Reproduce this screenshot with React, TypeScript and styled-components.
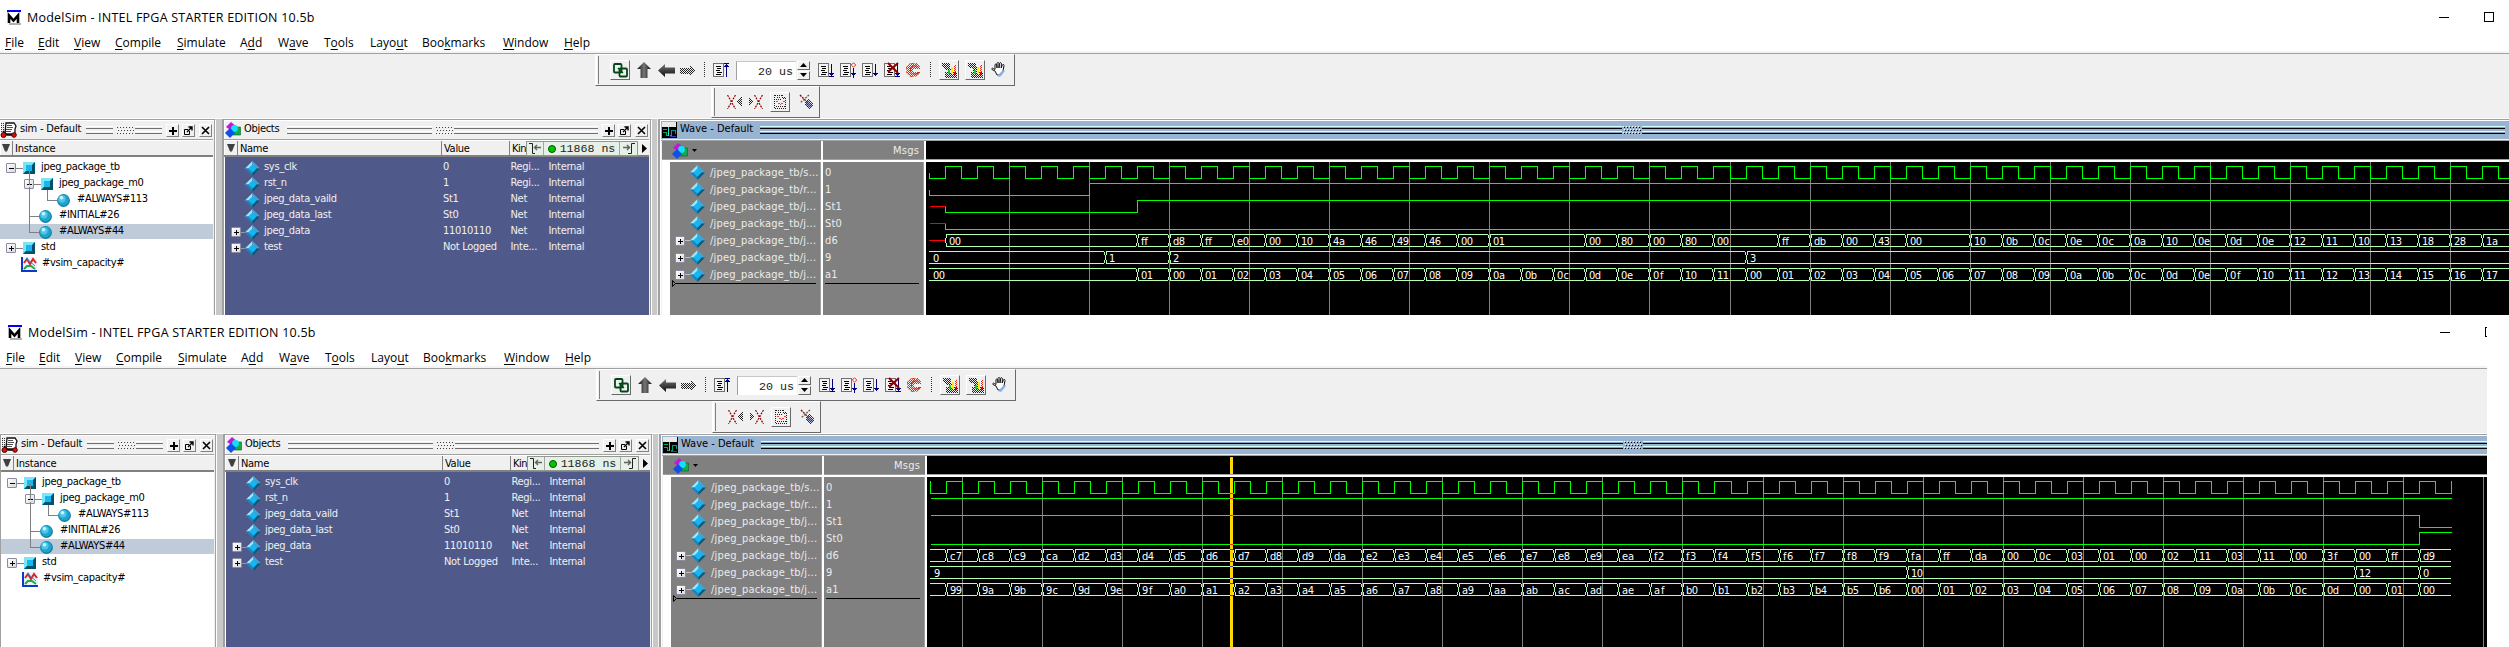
import React from "react";
import styled, { createGlobalStyle } from "styled-components";

const Global = createGlobalStyle`
  html, body { margin: 0; padding: 0; background: #fff; overflow: hidden; }
  * { box-sizing: border-box; }
  svg { display: block; flex: none; }
`;

const tahoma = `"DejaVu Sans Condensed", "DejaVu Sans", sans-serif`;
const segoe = `"Open Sans", "Noto Sans", sans-serif`;
const mono = `"Liberation Mono", monospace`;

const Page = styled.div`
  width: 2509px;
  height: 647px;
  background: #fff;
`;

const Window = styled.section<{ $w: number; $h: number; $inset: number }>`
  display: flex;
  flex-direction: column;
  width: ${(p) => p.$w}px;
  height: ${(p) => p.$h}px;
  overflow: hidden;
  background: #f0f0f0;
  --inset: ${(p) => p.$inset}px;
`;

const TitleBar = styled.header`
  display: flex;
  flex: none;
  align-items: center;
  height: 35px;
  padding-left: calc(7px + var(--inset));
  background: #fff;
  font: 12.5px/35px ${segoe};
  color: #000;
`;

const TitleText = styled.span`
  flex: none;
  width: 2418px;
  padding-left: 6px;
  letter-spacing: 0.22px;
  white-space: nowrap;
`;

const TitleButton = styled.span<{ $gap: number; $lift?: number }>`
  flex: none;
  margin-left: ${(p) => p.$gap}px;
  margin-bottom: ${(p) => p.$lift ?? 0}px;
`;

const MenuBar = styled.nav`
  display: flex;
  flex: none;
  height: 19px;
  padding-left: calc(5px + var(--inset));
  background: #fff;
  border-bottom: 1px solid #a0a0a0;
  box-shadow: inset 0 -2px #f4f4f4;
  font: 12px/15px ${segoe};
`;

const MenuItem = styled.span<{ $w: number }>`
  flex: none;
  width: ${(p) => p.$w}px;
  white-space: pre;
  u { text-underline-offset: 2px; text-decoration-thickness: 1px; }
`;

const ToolRow = styled.div<{ $left: number; $h: number }>`
  display: flex;
  flex: none;
  height: ${(p) => p.$h}px;
  padding-left: calc(${(p) => p.$left}px + var(--inset));
`;

const ToolBar = styled.div<{ $w: number }>`
  display: flex;
  align-items: center;
  width: ${(p) => p.$w}px;
  height: 32px;
  border: 1px solid #696969;
  border-top-color: #fff;
  border-left-color: #fff;
`;

const Handle = styled.span`
  flex: none;
  width: 3px;
  height: 28px;
  border-left: 1px solid #fff;
  border-right: 1px solid #808080;
`;

const Tool = styled.span<{ $gap: number; $raised?: boolean; $w: number }>`
  display: flex;
  flex: none;
  align-items: center;
  justify-content: center;
  width: ${(p) => p.$w}px;
  height: 20px;
  margin-left: ${(p) => p.$gap}px;
  ${(p) =>
    p.$raised &&
    "border: 1px solid #696969; border-top-color: #fff; border-left-color: #fff;"}
`;

const Grip = styled.span<{ $gap: number }>`
  flex: none;
  width: 18px;
  height: 8px;
  margin-left: ${(p) => p.$gap}px;
`;

const Dots = styled.span<{ $gap: number }>`
  flex: none;
  width: 1px;
  height: 16px;
  margin-left: ${(p) => p.$gap}px;
  background: repeating-linear-gradient(#303030 0 1px, transparent 1px 2px);
`;

const TimeField = styled.span`
  flex: none;
  width: 60px;
  height: 19px;
  margin-left: 7px;
  padding-right: 3px;
  background: #fff;
  border-top: 1px solid #c8c8c8;
  border-left: 1px solid #a0a0a0;
  font: 11.7px/20px ${mono};
  text-align: right;
  color: #222;
`;

const Spinner = styled.span`
  display: grid;
  flex: none;
  width: 13px;
  height: 19px;
  margin-left: 1px;
  grid-template-rows: 9px 9px;
  row-gap: 1px;
`;

const SpinKey = styled.span`
  display: grid;
  place-items: center;
  border: 1px solid #696969;
  border-top-color: #fff;
  border-left-color: #fff;
`;

const Workspace = styled.div`
  display: flex;
  flex: 1;
  min-height: 0;
  border-top: 1px solid #fff;
  font: 11px/16px ${tahoma};
  font-stretch: condensed;
  color: #000;
`;

const EdgeStrip = styled.span`
  flex: none;
  width: var(--inset);
  background: #a0a0a0;
`;

const Sash = styled.div<{ $w: number; $gap: number }>`
  flex: none;
  width: ${(p) => p.$w}px;
  margin-right: ${(p) => p.$gap}px;
  background: #c8c8c8;
`;

const Panel = styled.div<{ $w: number; $open?: boolean }>`
  display: flex;
  flex: none;
  flex-direction: column;
  width: ${(p) => p.$w}px;
  border-top: 1px solid #a0a0a0;
  border-left: ${(p) => (p.$open ? "0" : "2px solid #a0a0a0")};
  border-right: 1px solid #fff;
  box-shadow: inset -1px 0 #a0a0a0, inset 0 1px #fff, inset 1px 0 #fff;
`;

const PanelTitle = styled.div<{ $pad: number }>`
  display: flex;
  flex: none;
  align-items: center;
  height: 20px;
  margin-right: 2px;
  padding-left: ${(p) => p.$pad}px;
  padding-top: 1px;
  border-bottom: 1px solid #a0a0a0;
`;

const PanelName = styled.span<{ $w: number; $ls: number }>`
  flex: none;
  width: ${(p) => p.$w}px;
  margin-left: 3px;
  padding-bottom: 2px;
  line-height: 14px;
  white-space: nowrap;
  letter-spacing: ${(p) => p.$ls}px;
`;

const Stripes = styled.span<{ $w: number; $gap?: number; $active?: boolean }>`
  flex: none;
  width: ${(p) => p.$w}px;
  height: 8px;
  margin-left: ${(p) => p.$gap ?? 0}px;
  background: ${(p) =>
    p.$active
      ? "linear-gradient(#d8fdff 0 1px,#86a3bd 1px 2px,#000 2px 3px,#99b4d1 3px 5px,#d8fdff 5px 6px,#86a3bd 6px 7px,#000 7px 8px)"
      : "linear-gradient(#fff 0 1px,#f0f0f0 1px 2px,#707070 2px 3px,#f0f0f0 3px 5px,#fff 5px 6px,#f0f0f0 6px 7px,#707070 7px 8px)"};
`;

const KeyCap = styled.span<{ $gap: number }>`
  display: grid;
  flex: none;
  place-items: center;
  width: 13px;
  height: 13px;
  margin-top: 1px;
  margin-left: ${(p) => p.$gap}px;
  border: 1px solid #808080;
  border-top-color: #fff;
  border-left-color: #fff;
`;

const ColumnHead = styled.div`
  position: relative;
  display: flex;
  flex: none;
  height: 17px;
  margin-right: 2px;
  border-top: 1px solid #fff;
  border-bottom: 2px solid #808080;
  line-height: 16px;
`;

const Head = styled.span<{ $w: number; $ls?: number }>`
  flex: none;
  width: ${(p) => p.$w}px;
  height: 14px;
  padding-left: 2px;
  border-left: 1px solid #808080;
  letter-spacing: ${(p) => p.$ls ?? -0.3}px;
  white-space: nowrap;
`;

const SortCell = styled.span<{ $w: number }>`
  display: grid;
  flex: none;
  width: ${(p) => p.$w}px;
  place-items: center;
`;

const TimeBadge = styled.div`
  position: absolute;
  top: 0;
  left: 302px;
  display: flex;
  width: 112px;
  height: 15px;
  background: #e6f0e6;
  border: 1px solid #909890;
  font: 11.6px/14px ${mono};
  color: #222;
`;

const BadgeCell = styled.span<{ $w: number }>`
  display: flex;
  flex: none;
  align-items: center;
  justify-content: center;
  gap: 4px;
  width: ${(p) => p.$w}px;
  border-right: 1px solid #a0a8a0;
  white-space: pre;
  &:last-child { border-right: 0; }
`;

const BadgeArrow = styled.span`
  position: absolute;
  top: 3px;
  left: 418px;
`;

const TreeBody = styled.div`
  flex: 1;
  margin-right: 2px;
  padding-top: 3px;
  background: #fff;
`;

const TreeRow = styled.div<{ $indent: number; $selected?: boolean }>`
  position: relative;
  display: flex;
  align-items: center;
  height: 16px;
  padding-left: ${(p) => p.$indent}px;
  background: ${(p) =>
    p.$selected ? "linear-gradient(#bfcbd9 0 15px, #fff 15px)" : "transparent"};
  white-space: nowrap;
`;

const TreeLabel = styled.span<{ $gap: number; $ls?: number }>`
  margin-left: ${(p) => p.$gap}px;
  padding-bottom: 2px;
  line-height: 14px;
  letter-spacing: ${(p) => p.$ls ?? -0.3}px;
`;

const Guide = styled.span<{ $x: number; $h: number; $w: number }>`
  position: absolute;
  left: ${(p) => p.$x}px;
  bottom: 7px;
  width: ${(p) => p.$w}px;
  height: ${(p) => p.$h}px;
  border-left: 1px solid #808080;
  border-bottom: 1px solid #808080;
`;

const Box = styled.span`
  display: grid;
  flex: none;
  place-items: center;
  width: 10px;
  height: 10px;
  background: linear-gradient(135deg, #fff, #d8d8e0);
  border: 1px solid #8c8ca0;
  border-radius: 1px;
`;

const Joint = styled.span<{ $w: number; $c?: string }>`
  flex: none;
  width: ${(p) => p.$w}px;
  height: 1px;
  background: ${(p) => p.$c ?? "#808080"};
`;

const Joined = styled.span`
  display: flex;
  align-items: center;
`;

const ObjectBody = styled.div`
  flex: 1;
  margin: 0 2px 0 1px;
  padding-top: 3px;
  background: #505a8a;
  color: #f0f0f0;
`;

const ObjectRow = styled.div`
  display: grid;
  grid-template-columns: 6px 14px 19px 179px 67.5px 38px auto;
  align-items: center;
  height: 16px;
  letter-spacing: -0.3px;
  white-space: nowrap;
`;

const ObjectText = styled.span`
  padding-bottom: 2px;
  line-height: 14px;
`;

const WavePanel = styled.div`
  display: flex;
  flex: 1;
  flex-direction: column;
  min-width: 0;
  overflow: hidden;
  border-top: 1px solid #a0a0a0;
  border-left: 2px solid #a0a0a0;
`;

const WaveInner = styled.div`
  display: flex;
  flex: 1;
  flex-direction: column;
  width: 1900px;
  border-top: 1px solid #fff;
  border-left: 1px solid #fff;
`;

const WaveTitle = styled.div`
  display: flex;
  flex: none;
  align-items: center;
  height: 20px;
  padding: 0 0 1px 1px;
  background: #99b4d1;
  border-bottom: 1px solid #a0a0a0;
  box-shadow: inset 0 -1px #f0f0f0;
`;

const WaveColumns = styled.div`
  display: flex;
  flex: 1;
  padding-left: 1px;
`;

const Column = styled.div<{ $w: number; $gray?: number; $white?: number }>`
  display: flex;
  flex: none;
  flex-direction: column;
  width: ${(p) => p.$w}px;
  border-right: ${(p) => p.$white ?? 0}px solid #fff;
  box-shadow: ${(p) => (p.$gray ? "inset -1px 0 #a0a0a0" : "none")};
  color: #ececec;
  letter-spacing: 0.2px;
`;

const ColumnTop = styled.div`
  display: flex;
  flex: none;
  align-items: center;
  height: 21px;
  padding-left: 10px;
  background: #808080;
  border-bottom: 2px solid #fff;
  box-shadow: inset 0 -1px #a0a0a0;
`;

const Msgs = styled.span`
  margin-left: auto;
  padding-right: 5px;
`;

const ColumnBody = styled.div<{ $strip?: number; $pad: number }>`
  flex: 1;
  padding: 2px 0 0 ${(p) => p.$pad}px;
  margin-right: 1px;
  background: #808080;
  border-left: ${(p) => p.$strip ?? 0}px solid #fff;
`;

const SignalRow = styled.div`
  display: grid;
  grid-template-columns: 10px 5px 20px auto;
  align-items: center;
  height: 17px;
  white-space: nowrap;
`;

const ValueRow = styled.div`
  height: 17px;
  line-height: 17px;
`;

const EndLine = styled.div<{ $w: number }>`
  width: ${(p) => p.$w}px;
  height: 1px;
  background: #000;
`;

const EndMarker = styled.div`
  display: flex;
  align-items: center;
  height: 7px;
  margin: -3px 0 0 -3px;
`;

/* ---------- icons ---------- */

const Logo = () => (
  <svg width="14" height="15" viewBox="0 0 14 15">
    <rect width="14" height="2" fill="#0000ff" />
    <rect x="2" y="13" width="12" height="2" fill="#b0b0b0" />
    <path d="M2 13V5.500l4.500 5 4.500-5V13" fill="none" stroke="#000" strokeWidth="2.600" />
  </svg>
);

const Diamond = ({ s = 15 }: { s?: number }) => (
  <svg width={s} height={s} viewBox="0 0 16 16">
    <path d="M8 0L0 8l4 0 4-4z" fill="#9be8fb" />
    <path d="M8 0l8 8h-4L8 4z" fill="#38a8dc" />
    <path d="M0 8l8 8v-4L4 8z" fill="#1486c4" />
    <path d="M16 8l-8 8v-4l4-4z" fill="#085878" />
    <path d="M8 3.600L12.400 8 8 12.400 3.600 8z" fill="#14b6f4" />
  </svg>
);

const Cube = () => (
  <svg width="12" height="12" viewBox="0 0 12 12">
    <rect width="12" height="12" fill="#18b4e8" />
    <path d="M0 0h12L9 3H3v6L0 12z" fill="#7ce4f8" />
    <path d="M12 0v12H0l3-3h6V3z" fill="#045068" />
    <rect x="3" y="3" width="6" height="6" fill="#14b8ec" />
  </svg>
);

const Sphere = () => (
  <svg width="13" height="13" viewBox="0 0 13 13">
    <circle cx="6.500" cy="6.500" r="6.400" fill="#0c80a8" />
    <circle cx="6.200" cy="6" r="5.600" fill="#20a4cc" />
    <circle cx="5" cy="4.800" r="3.600" fill="#4cc8ec" />
    <circle cx="4.500" cy="3.800" r="1.800" fill="#c8f6ff" />
  </svg>
);

const ChartIcon = () => (
  <svg width="16" height="15" viewBox="0 0 16 15">
    <rect x="2" width="14" height="13" fill="#e8f4fc" />
    <path d="M1 0v14h15" fill="none" stroke="#1038c8" strokeWidth="2" />
    <path d="M3 6l3-4 3 5 3-5 3 4" fill="none" stroke="#e02020" strokeWidth="2" />
    <path d="M5 1l9 8" stroke="#3088d0" />
    <path d="M3 12l3-3 4 0 4 3" fill="none" stroke="#28a838" strokeWidth="2" />
  </svg>
);

const Shapes = () => (
  <svg width="16" height="16" viewBox="0 0 16 16">
    <rect x="8" y="5" width="7.500" height="8" fill="#18a848" stroke="#086028" strokeWidth=".6" />
    <path d="M6 0l6 5-5 4-6-4z" fill="#c018d8" />
    <circle cx="9.500" cy="6.500" r="3.400" fill="#10e0f8" />
    <path d="M5 6l5 5-5 5-5-5z" fill="#1050e8" />
  </svg>
);

const SimIcon = () => (
  <svg width="17" height="16" viewBox="0 0 17 16">
    <path d="M6 1h8l2 3-1 3v5H5z" fill="#fff" stroke="#111" strokeWidth="1.300" />
    <path d="M7 3.500h5M7 5.500h6M6 7.500h6M6 9.500h5" stroke="#222" strokeWidth=".8" />
    <path d="M1.500 1v9M3.500 1v8" stroke="#333" strokeDasharray="1 1" />
    <path d="M3 9l4 4h7" fill="none" stroke="#000" strokeWidth="1.500" />
    <circle cx="3.500" cy="13" r="2.500" fill="#d81010" stroke="#500" />
    <circle cx="14" cy="13" r="2.300" fill="#d81010" stroke="#500" />
  </svg>
);

const WaveIcon = () => (
  <svg width="15" height="16" viewBox="0 0 15 16" shapeRendering="crispEdges">
    <rect width="15" height="16" fill="#000" />
    <rect width="14" height="5" fill="#e8e8e8" />
    <path d="M1 10.500h3v3h3M1 7.500h4" fill="none" stroke="#00b050" />
    <path d="M6.500 5v9" stroke="#30e0e0" />
    <path d="M8 13.500h1v-5h4v3" fill="none" stroke="#00a080" />
    <path d="M8 14.500h6" stroke="#4030d0" />
  </svg>
);

const PlusGlyph = () => (
  <svg width="8" height="8" viewBox="0 0 8 8" shapeRendering="crispEdges">
    <path d="M3 0h2v3h3v2H5v3H3V5H0V3h3z" />
  </svg>
);
const FloatGlyph = () => (
  <svg width="9" height="9" viewBox="0 0 9 9" fill="none" stroke="#000">
    <path d="M4 3.500H.5v5h5V5" />
    <path d="M3 6l5-5M4.500 1H8v3.500" strokeWidth="1.400" />
  </svg>
);
const CloseGlyph = () => (
  <svg width="9" height="9" viewBox="0 0 9 9" stroke="#000" strokeWidth="1.600">
    <path d="M1 1l7 7M8 1L1 8" />
  </svg>
);
const BoxGlyph = ({ open }: { open?: boolean }) => (
  <svg width="6" height="6" viewBox="0 0 6 6" shapeRendering="crispEdges" stroke="#000">
    <path d={open ? "M.5 3.500h5" : "M.5 3.500h5M3.500 1v5"} />
  </svg>
);
const SortGlyph = () => (
  <svg width="8" height="8" viewBox="0 0 8 8">
    <path d="M0 0h8L5 7.500H3z" fill="#404040" />
  </svg>
);
const Dither = ({ active }: { active?: boolean }) => (
  <svg width="18" height="8" viewBox="0 0 18 8" shapeRendering="crispEdges" strokeDasharray="1 2">
    {[0, 3, 6].map((y, i) => (
      <g key={y}>
        <path d={`M${i === 1 ? 1 : 0} ${y + 0.5}h17`} stroke="#fff" />
        <path d={`M${i === 1 ? 2 : 1} ${y + 1.5}h16`} stroke={active ? "#000" : "#404040"} />
      </g>
    ))}
  </svg>
);

const Patterns = () => (
  <svg width="0" height="0">
    <defs>
      {[["dk", "#202020"], ["rd", "#e02810"], ["bl", "#1028a0"]].map(([id, c]) => (
        <pattern key={id} id={id} width="2" height="2" patternUnits="userSpaceOnUse">
          <rect width="1" height="1" fill={c} />
          <rect x="1" y="1" width="1" height="1" fill={c} />
        </pattern>
      ))}
      <linearGradient id="metal" x2="1" y2="0">
        <stop offset="0" stopColor="#111" />
        <stop offset=".5" stopColor="#777" />
        <stop offset="1" stopColor="#111" />
      </linearGradient>
      <linearGradient id="metalH" x2="0" y2="1">
        <stop offset="0" stopColor="#777" />
        <stop offset="1" stopColor="#0a0a0a" />
      </linearGradient>
    </defs>
  </svg>
);

const ChainIcon = () => (
  <svg width="15" height="15" viewBox="0 0 15 15" fill="none" stroke="#004818" strokeWidth="1.800">
    <rect x="1" y="1" width="7.500" height="8.500" rx="1" />
    <rect x="6.500" y="5.500" width="7.500" height="8" rx="1" />
    <path d="M5 5l5 5" strokeWidth="1.200" />
  </svg>
);
const UpIcon = () => (
  <svg width="14" height="16" viewBox="0 0 14 16"><path d="M7 0l7 7h-3.500v9h-7V7H0z" fill="url(#metal)" /></svg>
);
const LeftIcon = () => (
  <svg width="17" height="13" viewBox="0 0 17 13"><path d="M0 6.500L7 0v3.500h10v6H7V13z" fill="url(#metalH)" /></svg>
);
const RightIcon = () => (
  <svg width="16" height="13" viewBox="0 0 16 13" shapeRendering="crispEdges"><path d="M16 6.500L10 0v3.500H0v6h10V13z" fill="url(#dk)" /></svg>
);

const DocIcon = ({ kind }: { kind: "restart" | "run" | "cont" | "all" | "break" }) => (
  <svg width="16" height="16" viewBox="0 0 16 16" fill="none">
    <g shapeRendering="crispEdges">
      <rect x=".5" y="1.500" width="10" height="13" fill="#f4f4f4" stroke="#707070" />
      <path d="M3 4.500h5M4 6.500h4M3 8.500h4M4 10.500h5M3 12.500h5" stroke="#000" />
    </g>
    <g stroke="#000080" shapeRendering="crispEdges">
      {kind === "restart" && <path d="M11 1.500h5M11 4.500h5M12 3.500h3M13.500 2v13" />}
      {kind !== "restart" && <path d={`M13.500 ${kind === "cont" ? 6 : 2}v12M11 11.500h5M12 12.500h3`} />}
      {(kind === "run" || kind === "break") && <path d="M11 14.500h5" />}
    </g>
    {kind === "cont" && <path d="M13.500.8l2.200 2.200-2.200 2.200L11.300 3z" stroke="#e02020" fill="#fff" />}
    {kind === "break" && <path d="M4 1l10 10M14 1L4 10" stroke="#900000" strokeWidth="2" />}
  </svg>
);

const StopIcon = () => (
  <svg width="14" height="14" viewBox="0 0 14 14">
    <path d="M4 0h6l4 4v2H9L8 5 6 7l2 2h6v1l-4 4H4l-4-4V4z" fill="url(#rd)" shapeRendering="crispEdges" />
    <path d="M12.500 4.500l-2-1.500H7L4.500 5v4L7 11h4l2-2" fill="none" stroke="#e02810" />
    <path d="M4 .5h6l3.500 3.500M4 .5L.5 4v6L4 13.500h6l3.500-3.500" fill="none" stroke="#f07860" strokeDasharray="2 1" />
  </svg>
);

const ProfileIcon = ({ alt }: { alt?: boolean }) => (
  <svg width="16" height="16" viewBox="0 0 16 16" shapeRendering="crispEdges">
    <path d={alt ? "M1 1h8v4l2 2v7H6V7L1 5z" : "M1 1h8v5l2 2H6L1 5z"} fill="url(#dk)" />
    <path d="M4 10h12v6H4z" fill="url(#dk)" />
    <path d="M8 8v4" stroke="#10d020" strokeWidth="2" />
    <path d="M11 5v7" stroke="#f8f000" strokeWidth="2" />
    <path d="M14.500 3v9" stroke="#f02020" strokeDasharray="1 1" />
    <path d="M13.500 4v9" stroke="#f02020" strokeDasharray="1 1" />
  </svg>
);

const HandIcon = () => (
  <svg width="16" height="16" viewBox="0 0 16 16">
    <path d="M4 9L1 7.500c-.8-1 .4-1.800 1.400-1L4 7.500V3c0-1.300 1.600-1.300 1.800 0L6 6V1.500c0-1.300 1.900-1.300 2 0V6l.5-4.500c.3-1.200 1.900-1 1.900.2L10.200 6l1.100-3c.5-1 1.900-.6 1.700.5L12 9l-2 4H6z" fill="#fff" stroke="#101010" />
    <path d="M6 14l6-6 2 1-5 6z" fill="#88b0e8" />
  </svg>
);

const DelIcon = ({ flip }: { flip?: boolean }) => (
  <svg width="15" height="14" viewBox="0 0 15 14">
    <g transform={flip ? "translate(15 0) scale(-1 1)" : undefined}>
      <path d="M.5 0L4 6v2L.5 14M8.500 0L5 6v2l3.500 6" fill="none" stroke="#900000" strokeWidth="1.200" strokeDasharray="2 1" />
      <path d="M14.500 2v10L9 7z" fill="url(#dk)" shapeRendering="crispEdges" />
    </g>
  </svg>
);

const PageIcon = () => (
  <svg width="12" height="14" viewBox="0 0 12 14" fill="none" shapeRendering="crispEdges">
    <path d="M.5.5h8l3 3v10H.5z" stroke="#202020" strokeDasharray="1 1" />
    <path d="M8.500 0v3.500H12M3 2.500h4M2 4.500h5M2 11.500h9" stroke="#202020" strokeDasharray="1 1" />
    <path d="M2 6.500h2M4 8.500h2M7 8.500h2M9 6.500h2M6 9.500h1" stroke="#f04040" />
  </svg>
);

const WipeIcon = () => (
  <svg width="14" height="16" viewBox="0 0 14 16">
    <path d="M1 1l8 8" stroke="#900000" strokeDasharray="2 1" strokeWidth="1.400" />
    <path d="M10 1L1 9" stroke="#606060" strokeDasharray="2 1" strokeWidth="1.400" />
    <path d="M6 7l3-2 5 5v3l-3 2-5-4z" fill="url(#bl)" shapeRendering="crispEdges" />
    <path d="M7 7l6 4-1 3-5-3z" fill="#3050c0" opacity=".5" />
  </svg>
);

/* ---------- waveform drawing ---------- */

type Level = "x" | 0 | 1;
type Step<T> = [number, T];

interface Trace {
  end: number;
  clockStub: boolean;
  gridFirst: number;
  bits: Step<Level>[][];
  buses: Step<string | null>[][];
  cursor?: number;
}

/* Half-period n of the clock to a pixel column of the drawing. */
const col = (n: number) => 3 + Math.round(16.01 * n);

const BitTrace = ({ top, steps, end, stub }: { top: number; steps: Step<Level>[]; end: number; stub: boolean }) => {
  const yOf = (l: Level) => top + (l === 1 ? 0.5 : l === 0 ? 12.5 : 6.5);
  let green = "";
  let red = "";
  steps.forEach(([n, l], i) => {
    const x1 = col(n) + 0.5;
    const x2 = col(i + 1 < steps.length ? steps[i + 1][0] : end) + 0.5;
    const y = yOf(l);
    if (l === "x") {
      red += `M${x1} ${y}H${x2}`;
      return;
    }
    green += i > 0 ? `M${x1} ${yOf(steps[i - 1][1])}V${y}H${x2}` : stub ? `M${x1} ${top + 7}V${y}H${x2}` : `M${x1} ${y}H${x2}`;
  });
  return (
    <g fill="none">
      <path d={green} stroke="#00ff00" />
      <path d={red} stroke="#ff0000" />
    </g>
  );
};

const BusLabel = styled.text`
  font: 11px ${tahoma};
  font-stretch: condensed;
  fill: #fff;
`;

const labelWidth = (v: string) => (v === "ff" ? 8.4 : v.includes("f") ? 10.4 : v.length * 6);

const BusTrace = ({ top, steps, end }: { top: number; steps: Step<string | null>[]; end: number }) => {
  let d = "";
  let red = "";
  steps.forEach(([n, v], i) => {
    const last = i + 1 === steps.length;
    const x1 = col(n);
    const x2 = col(last ? end : steps[i + 1][0]);
    if (v === "x") {
      red += `M${x1} ${top + 6.5}H${x2}`;
      return;
    }
    const l = i ? x1 + 1 : x1;
    const r = last ? x2 : x2 - 1;
    d += `M${l} ${top + 0.5}H${r}M${l} ${top + 12.5}H${r}`;
    if (i) d += `M${x1 + 1.5} ${top + 1}v3M${x1 + 1.5} ${top + 9}v3M${x1 + 0.5} ${top + 4}v5`;
    if (!last) d += `M${x2 - 0.5} ${top + 1}v3M${x2 - 0.5} ${top + 9}v3`;
  });
  return (
    <g>
      <path d={d} stroke="#b4ffb4" fill="none" />
      <path d={red} stroke="#ff0000" fill="none" />
      {steps.map(([n, v]) =>
        v && v !== "x" ? (
          <BusLabel key={n} x={col(n) + 4} y={top + 11} textLength={labelWidth(v)}>
            {v}
          </BusLabel>
        ) : null
      )}
    </g>
  );
};

const clock = (to: number): Step<Level>[] =>
  Array.from({ length: to }, (_, i) => [i, (i % 2 ? 1 : 0) as Level] as Step<Level>);

const WavePlot = ({ trace, h }: { trace: Trace; h: number }) => {
  const grid: number[] = [];
  for (let n = trace.gridFirst; n <= 98; n += 5) grid.push(n);
  return (
    <svg width="1583" height={h} viewBox={`0 0 1583 ${h}`} shapeRendering="crispEdges">
      <rect width="1583" height={h} fill="#000" />
      <rect y="18" width="1583" height="1" fill="#a0a0a0" />
      <rect y="19" width="1583" height="2" fill="#fff" />
      <path d={grid.map((n) => `M${col(n) + 0.5} 21V${h}`).join("")} stroke="#808080" />
      {trace.clockStub && <path d={`M3.500 25V38M${col(95) + 0.5} 25V38`} stroke="#00ff00" />}
      {trace.bits.map((s, i) => (
        <BitTrace key={i} top={25 + 17 * i} steps={s} end={trace.end} stub={!trace.clockStub} />
      ))}
      {trace.buses.map((s, i) => (
        <BusTrace key={i} top={93 + 17 * i} steps={s} end={trace.end} />
      ))}
      {trace.cursor !== undefined && (
        <g>
          <path d={`M${trace.cursor + 1.5} 1V18M${trace.cursor + 1.5} 22V${h}`} stroke="#ffd700" strokeWidth="3" />
          <path d={[37.5, 42.5, 59.5, 88.5].map((y) => `M${trace.cursor} ${y}h3`).join("")} stroke="#ff2a00" />
          <path d={[93.5, 105.5, 110.5, 122.5, 127.5, 139.5].map((y) => `M${trace.cursor} ${y}h3`).join("")} stroke="#5a3c90" />
        </g>
      )}
    </svg>
  );
};

const seq = (start: number, words: string): Step<string>[] =>
  words.split(" ").map((w, i) => [start + 2 * i, w] as Step<string>);

const firstTrace: Trace = {
  end: 99,
  clockStub: false,
  gridFirst: 5,
  bits: [
    clock(99),
    [[0, 0], [10, 1]],
    [[0, "x"], [1, 0], [13, 1]],
    [[0, "x"], [1, 0]],
  ],
  buses: [
    [
      [0, "x"], [1, "00"],
      ...seq(13, "ff d8 ff e0 00 10 4a 46 49 46 00 01"),
      ...seq(41, "00 80 00 80 00"),
      ...seq(53, "ff db 00 43 00"),
      ...seq(65, "10 0b 0c 0e 0c 0a 10 0e 0d 0e 12 11 10 13 18 28 1a"),
    ],
    [[0, "0"], [11, "1"], [15, "2"], [51, "3"]],
    [
      [0, "00"], [13, "01"],
      ...seq(15, "00 01 02 03 04 05 06 07 08 09 0a 0b 0c 0d 0e 0f 10 11"),
      ...seq(51, "00 01 02 03 04 05 06 07 08 09 0a 0b 0c 0d 0e 0f 10 11 12 13 14 15 16 17"),
    ],
  ],
};

const secondTrace: Trace = {
  end: 95,
  clockStub: true,
  gridFirst: 2,
  cursor: 303,
  bits: [
    clock(95),
    [[0, 1]],
    [[0, 1], [93, 0]],
    [[0, 0], [93, 1]],
  ],
  buses: [
    [
      [0, null],
      ...seq(1, "c7 c8 c9 ca d2 d3 d4 d5 d6 d7 d8 d9 da e2 e3 e4 e5 e6 e7 e8 e9 ea f2 f3 f4 f5 f6 f7 f8 f9 fa ff da 00 0c 03 01 00 02 11 03 11 00 3f 00 ff d9"),
    ],
    [[0, "9"], [61, "10"], [89, "12"], [93, "0"]],
    [
      [0, null],
      ...seq(1, "99 9a 9b 9c 9d 9e 9f a0 a1 a2 a3 a4 a5 a6 a7 a8 a9 aa ab ac ad ae af b0 b1 b2 b3 b4 b5 b6 00 01 02 03 04 05 06 07 08 09 0a 0b 0c 0d 00 01 00"),
    ],
  ],
};

/* ---------- window ---------- */

const menus: [string, string, string, number][] = [
  ["", "F", "ile", 33], ["", "E", "dit", 36], ["", "V", "iew", 41], ["", "C", "ompile", 62],
  ["", "S", "imulate", 63], ["A", "d", "d", 38], ["W", "a", "ve", 46], ["T", "o", "ols", 46],
  ["Layo", "u", "t", 52], ["Boo", "k", "marks", 81], ["", "W", "indow", 61], ["", "H", "elp", 40],
];

const objects: [boolean, string, string, string][] = [
  [false, "sys_clk", "0", "Regi..."],
  [false, "rst_n", "1", "Regi..."],
  [false, "jpeg_data_vaild", "St1", "Net"],
  [false, "jpeg_data_last", "St0", "Net"],
  [true, "jpeg_data", "11010110", "Net"],
  [true, "test", "Not Logged", "Inte..."],
];

const signals: [boolean, string, string][] = [
  [false, "/jpeg_package_tb/s...", "0"],
  [false, "/jpeg_package_tb/r...", "1"],
  [false, "/jpeg_package_tb/j...", "St1"],
  [false, "/jpeg_package_tb/j...", "St0"],
  [true, "/jpeg_package_tb/j...", "d6"],
  [true, "/jpeg_package_tb/j...", "9"],
  [true, "/jpeg_package_tb/j...", "a1"],
];

const PanelKeys = ({ first }: { first: number }) => (
  <>
    <KeyCap $gap={first}><PlusGlyph /></KeyCap>
    <KeyCap $gap={3}><FloatGlyph /></KeyCap>
    <KeyCap $gap={4}><CloseGlyph /></KeyCap>
  </>
);

const SimPanel = () => (
  <Panel $w={216} $open>
    <PanelTitle $pad={0}>
      <SimIcon />
      <PanelName $w={66} $ls={-0.18}>sim - Default</PanelName>
      <Stripes $w={27} />
      <Grip $gap={3}><Dither /></Grip>
      <Stripes $w={27} $gap={1} />
      <PanelKeys first={4} />
    </PanelTitle>
    <ColumnHead>
      <SortCell $w={12}><SortGlyph /></SortCell>
      <Head $w={190} $ls={-0.2}>Instance</Head>
    </ColumnHead>
    <TreeBody>
      <TreeRow $indent={6}>
        <Box><BoxGlyph open /></Box><Joint $w={7} /><Cube /><TreeLabel $gap={6}>jpeg_package_tb</TreeLabel>
      </TreeRow>
      <TreeRow $indent={24}>
        <Guide $x={29} $h={16} $w={1} />
        <Box><BoxGlyph open /></Box><Joint $w={7} /><Cube /><TreeLabel $gap={6}>jpeg_package_m0</TreeLabel>
      </TreeRow>
      <TreeRow $indent={57}>
        <Guide $x={29} $h={14} $w={1} />
        <Guide $x={47} $h={11} $w={10} />
        <Sphere /><TreeLabel $gap={7}>#ALWAYS#113</TreeLabel>
      </TreeRow>
      <TreeRow $indent={39}>
        <Guide $x={29} $h={20} $w={10} />
        <Sphere /><TreeLabel $gap={7}>#INITIAL#26</TreeLabel>
      </TreeRow>
      <TreeRow $indent={39} $selected>
        <Guide $x={29} $h={16} $w={10} />
        <Sphere /><TreeLabel $gap={7}>#ALWAYS#44</TreeLabel>
      </TreeRow>
      <TreeRow $indent={6}>
        <Box><BoxGlyph /></Box><Joint $w={7} /><Cube /><TreeLabel $gap={6}>std</TreeLabel>
      </TreeRow>
      <TreeRow $indent={21}>
        <ChartIcon /><TreeLabel $gap={5}>#vsim_capacity#</TreeLabel>
      </TreeRow>
    </TreeBody>
  </Panel>
);

const ObjectsPanel = () => (
  <Panel $w={430}>
    <PanelTitle $pad={1}>
      <Shapes />
      <PanelName $w={43} $ls={-0.3}>Objects</PanelName>
      <Stripes $w={145} />
      <Grip $gap={3}><Dither /></Grip>
      <Stripes $w={144} $gap={1} />
      <PanelKeys first={4} />
    </PanelTitle>
    <ColumnHead>
      <SortCell $w={13}><SortGlyph /></SortCell>
      <Head $w={204}>Name</Head>
      <Head $w={68}>Value</Head>
      <Head $w={20} $ls={-0.5}>Kin</Head>
      <TimeBadge>
        <BadgeCell $w={17}>
          <svg width="12" height="11" viewBox="0 0 12 11" fill="none" stroke="#202020">
            <path d="M0 .5h3.500v10H6" /><path d="M5 4.500h7M8 2L5.500 4.500 8 7" stroke="#606060" strokeWidth="1.400" />
          </svg>
        </BadgeCell>
        <BadgeCell $w={76}>
          <svg width="8" height="8" viewBox="0 0 8 8"><circle cx="4" cy="4" r="3.500" fill="#00c800" stroke="#005000" /></svg>
          11868 ns
        </BadgeCell>
        <BadgeCell $w={17}>
          <svg width="12" height="11" viewBox="0 0 12 11" fill="none" stroke="#202020">
            <path d="M12 .5H8.500v10H5" /><path d="M0 4.500h7M4 2l2.500 2.500L4 7" stroke="#606060" strokeWidth="1.400" />
          </svg>
        </BadgeCell>
      </TimeBadge>
      <BadgeArrow>
        <svg width="5" height="9" viewBox="0 0 5 9"><path d="M0 0l5 4.500L0 9z" /></svg>
      </BadgeArrow>
    </ColumnHead>
    <ObjectBody>
      {objects.map(([exp, name, value, kind]) => (
        <ObjectRow key={name}>
          <span />
          {exp ? <Joined><Box><BoxGlyph /></Box><Joint $w={4} $c="#9098b0" /></Joined> : <span />}
          <Diamond />
          <ObjectText>{name}</ObjectText>
          <ObjectText>{value}</ObjectText>
          <ObjectText>{kind}</ObjectText>
          <ObjectText>Internal</ObjectText>
        </ObjectRow>
      ))}
    </ObjectBody>
  </Panel>
);

const WaveView = ({ trace, h }: { trace: Trace; h: number }) => (
  <WavePanel>
    <WaveInner>
      <WaveTitle>
        <WaveIcon />
        <PanelName $w={79} $ls={0}>Wave - Default</PanelName>
        <Stripes $w={862} $gap={1} $active />
        <Grip $gap={1}><Dither active /></Grip>
        <Stripes $w={863} $gap={1} $active />
        <KeyCap $gap={4} />
      </WaveTitle>
      <WaveColumns>
        <Column $w={161} $gray={1} $white={2}>
          <ColumnTop>
            <Shapes />
            <Tool $gap={4} $w={5}>
              <svg width="5" height="4" viewBox="0 0 5 4"><path d="M0 0h5L2.500 3z" /></svg>
            </Tool>
          </ColumnTop>
          <ColumnBody $strip={8} $pad={5}>
            {signals.map(([exp, name], i) => (
              <SignalRow key={i}>
                {exp ? <Box><BoxGlyph /></Box> : <span />}
                {exp ? <Joint $w={6} $c="#c0c0c0" /> : <span />}
                <Diamond />
                <span>{name}</span>
              </SignalRow>
            ))}
            <EndMarker>
              <svg width="4" height="7" viewBox="0 0 4 7" fill="none" stroke="#000"><path d="M.5.5v6l3-3z" /></svg>
              <EndLine $w={140} />
            </EndMarker>
          </ColumnBody>
        </Column>
        <Column $w={103} $gray={1} $white={2}>
          <ColumnTop><Msgs>Msgs</Msgs></ColumnTop>
          <ColumnBody $pad={2}>
            {signals.map(([, , value], i) => (
              <ValueRow key={i}>{value}</ValueRow>
            ))}
            <EndLine $w={94} />
          </ColumnBody>
        </Column>
        <WavePlot trace={trace} h={h} />
      </WaveColumns>
    </WaveInner>
  </WavePanel>
);

const ModelSim = ({ w, h, inset, trace }: { w: number; h: number; inset: number; trace: Trace }) => (
  <Window $w={w} $h={h} $inset={inset}>
    <TitleBar>
      <Logo />
      <TitleText>ModelSim - INTEL FPGA STARTER EDITION 10.5b</TitleText>
      <TitleButton $gap={0}>
        <svg width="10" height="1"><rect width="10" height="1" /></svg>
      </TitleButton>
      <TitleButton $gap={35} $lift={1}>
        <svg width="10" height="10" viewBox="0 0 10 10" fill="none" stroke="#000"><rect x=".5" y=".5" width="9" height="9" /></svg>
      </TitleButton>
    </TitleBar>
    <MenuBar>
      {menus.map(([a, u, b, width]) => (
        <MenuItem key={a + u + b} $w={width}>{a}<u>{u}</u>{b}</MenuItem>
      ))}
    </MenuBar>
    <ToolRow $left={595} $h={32}>
      <ToolBar $w={420}>
        <Handle />
        <Tool $gap={11} $w={20} $raised><ChainIcon /></Tool>
        <Tool $gap={7} $w={14}><UpIcon /></Tool>
        <Tool $gap={7} $w={17}><LeftIcon /></Tool>
        <Tool $gap={5} $w={16}><RightIcon /></Tool>
        <Dots $gap={8} />
        <Tool $gap={8} $w={16}><DocIcon kind="restart" /></Tool>
        <TimeField>20 us</TimeField>
        <Spinner>
          <SpinKey><svg width="7" height="4" viewBox="0 0 7 4"><path d="M0 4h7L3.500 0z" /></svg></SpinKey>
          <SpinKey><svg width="7" height="4" viewBox="0 0 7 4"><path d="M0 0h7L3.500 4z" /></svg></SpinKey>
        </Spinner>
        <Tool $gap={8} $w={16}><DocIcon kind="run" /></Tool>
        <Tool $gap={6} $w={16}><DocIcon kind="cont" /></Tool>
        <Tool $gap={6} $w={16}><DocIcon kind="all" /></Tool>
        <Tool $gap={6} $w={16}><DocIcon kind="break" /></Tool>
        <Tool $gap={6} $w={14}><StopIcon /></Tool>
        <Dots $gap={10} />
        <Tool $gap={8} $w={20} $raised><ProfileIcon /></Tool>
        <Tool $gap={6} $w={20} $raised><ProfileIcon alt /></Tool>
        <Tool $gap={6} $w={16}><HandIcon /></Tool>
      </ToolBar>
    </ToolRow>
    <ToolRow $left={711} $h={32}>
      <ToolBar $w={109}>
        <Handle />
        <Tool $gap={12} $w={15}><DelIcon /></Tool>
        <Tool $gap={6} $w={15}><DelIcon flip /></Tool>
        <Tool $gap={7} $w={20} $raised><PageIcon /></Tool>
        <Tool $gap={9} $w={14}><WipeIcon /></Tool>
      </ToolBar>
    </ToolRow>
    <Workspace>
      <EdgeStrip />
      <SimPanel />
      <Sash $w={6} $gap={0} />
      <ObjectsPanel />
      <Sash $w={5} $gap={1} />
      <WaveView trace={trace} h={h - 141} />
    </Workspace>
  </Window>
);

export default function App() {
  return (
    <Page>
      <Global />
      <Patterns />
      <ModelSim w={2509} h={315} inset={0} trace={firstTrace} />
      <ModelSim w={2487} h={332} inset={1} trace={secondTrace} />
    </Page>
  );
}
